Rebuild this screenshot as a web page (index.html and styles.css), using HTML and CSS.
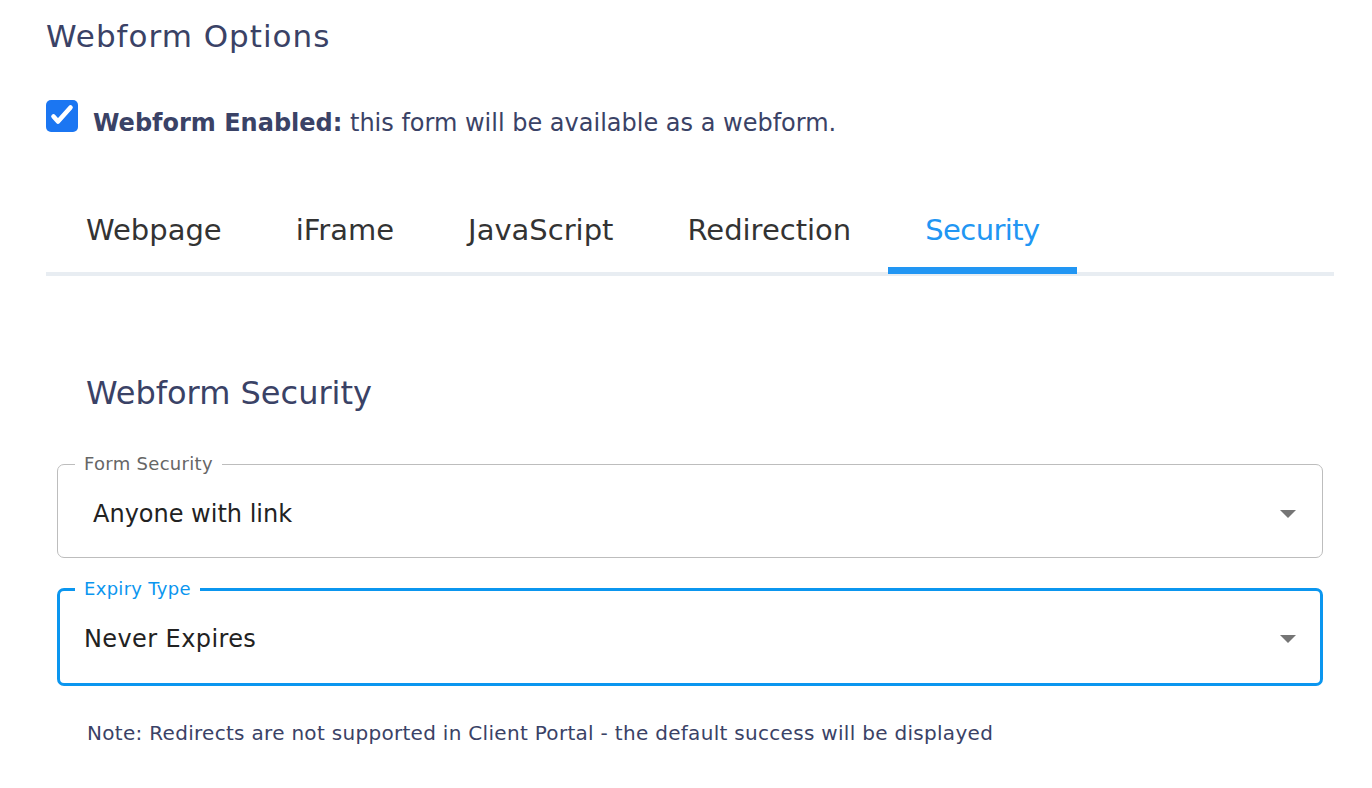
FILE: index.html
```html
<!DOCTYPE html>
<html>
<head>
<meta charset="utf-8">
<link rel="stylesheet" href="styles.css">
</head>
<body>
<div class="page">
  <h1 class="title">Webform Options</h1>
  <div class="enable-row">
    <span class="checkbox">
      <svg viewBox="0 0 32 32" width="32" height="32"><path d="M7.5 16.5 L12 21.5 L24.5 7.5" fill="none" stroke="#fff" stroke-width="4.6" stroke-linecap="round" stroke-linejoin="round"/></svg>
    </span>
    <span class="enable-text"><b>Webform Enabled:</b> this form will be available as a webform.</span>
  </div>
  <div class="tabs">
    <div class="tab">Webpage</div>
    <div class="tab">iFrame</div>
    <div class="tab">JavaScript</div>
    <div class="tab">Redirection</div>
    <div class="tab active">Security</div>
  </div>
  <h2 class="section-title">Webform Security</h2>
  <fieldset class="field">
    <legend class="field-label">Form Security</legend>
    <div class="field-value value-indent"><span>Anyone with link</span><span class="arrow"></span></div>
  </fieldset>
  <fieldset class="field focused">
    <legend class="field-label">Expiry Type</legend>
    <div class="field-value"><span>Never Expires</span><span class="arrow"></span></div>
  </fieldset>
  <p class="note">Note: Redirects are not supported in Client Portal - the default success will be displayed</p>
</div>
</body>
</html>
```
FILE: styles.css
```css
html, body {
  margin: 0;
  padding: 0;
  background: #fff;
}
body {
  font-family: "DejaVu Sans", "Open Sans", sans-serif;
  color: #3a4266;
}
.page {
  padding: 15px 38px 0 46px;
}
.title {
  margin: 0;
  font-size: 31px;
  letter-spacing: 1px;
  line-height: 42px;
  font-weight: 400;
  color: #3a4266;
}
.enable-row {
  display: flex;
  align-items: flex-start;
  height: 32px;
  margin-top: 43px;
}
.checkbox {
  width: 32px;
  height: 32px;
  border-radius: 5px;
  background: #1b76f2;
  display: flex;
  flex: none;
}
.enable-text {
  margin-left: 15px;
  margin-top: 7px;
  font-size: 24px;
  line-height: 32px;
  color: #3a4266;
}
.enable-text b {
  font-weight: 700;
}
.tabs {
  display: flex;
  margin-top: 52px;
  padding-left: 3px;
  border-bottom: 4px solid #e8edf2;
}
.tab {
  padding: 26px 37px 17px;
  line-height: 40px;
  font-size: 29px;
  color: #333;
  border-bottom: 7px solid transparent;
  margin-bottom: -2px;
}
.tab.active {
  color: #2196f3;
  border-bottom-color: #2196f3;
  letter-spacing: -0.6px;
}
.section-title {
  margin: 95px 0 0 40px;
  font-size: 32px;
  line-height: 44px;
  font-weight: 400;
  color: #3a4266;
}
.field {
  margin: 39px 0 0 11px;
  width: 1266px;
  box-sizing: border-box;
  border: 1px solid #bdbdbd;
  border-radius: 7px;
  padding: 0 0 7px 17px;
}
.field-label {
  padding: 0 9px;
  font-size: 18px;
  letter-spacing: 0.3px;
  line-height: 20px;
  color: #666;
}
.field-value {
  display: flex;
  align-items: center;
  justify-content: space-between;
  box-sizing: border-box;
  height: 76px;
  padding-top: 4px;
  padding-right: 26px;
  font-size: 24px;
  color: #222;
}
.value-indent {
  padding-left: 18px;
}
.arrow {
  width: 0;
  height: 0;
  border-left: 8px solid transparent;
  border-right: 8px solid transparent;
  border-top: 8px solid #757575;
}
.field.focused {
  margin-top: 21px;
  border: 3px solid #0b96ef;
  padding-left: 15px;
  padding-bottom: 8px;
}
.field.focused .field-label {
  color: #0b96ef;
}
.field.focused .field-value {
  padding-left: 9px;
  padding-right: 24px;
  letter-spacing: 0.4px;
}
.note {
  margin: 33px 0 0 41px;
  font-size: 20px;
  letter-spacing: 0.3px;
  line-height: 28px;
  color: #3a4266;
}
```
